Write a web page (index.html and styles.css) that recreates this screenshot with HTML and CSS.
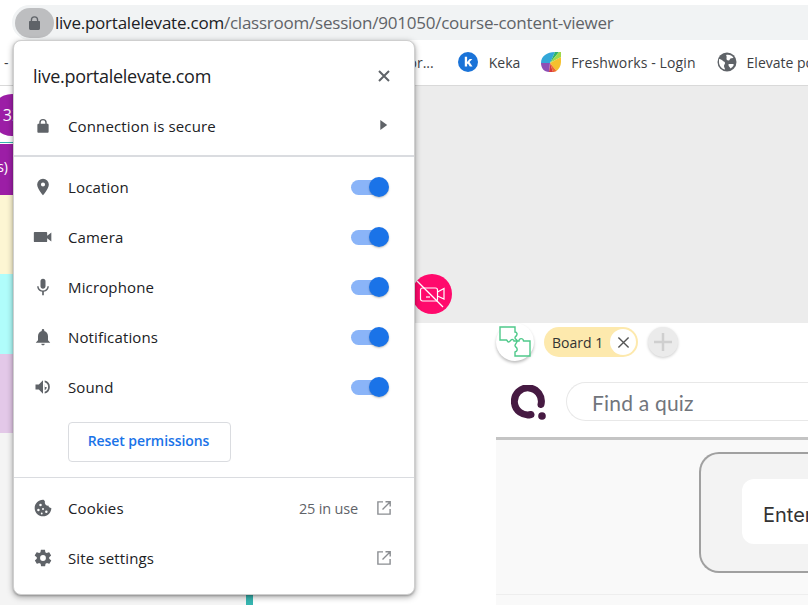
FILE: index.html
```html
<!DOCTYPE html>
<html lang="en">
<head>
<meta charset="utf-8">
<title>live.portalelevate.com</title>
<link rel="stylesheet" href="styles.css">
</head>
<body>
<div class="screen">
  <header class="address-row">
    <div class="omnibox">
      <span class="lock-pill">
        <svg class="lock-icon" viewBox="0 0 16 20"><path fill="#5f6368" d="M2.5 7V5.5a5.500 5.500 0 0 1 11 0V7H15a1 1 0 0 1 1 1v10a2 2 0 0 1-2 2H2a2 2 0 0 1-2-2V8a1 1 0 0 1 1-1zM4.500 7h7V5.500a3.500 3.500 0 0 0-7 0z"/></svg>
      </span>
      <span class="url"><span class="url-host">live.portalelevate.com</span>/classroom/session/901050/course-content-viewer</span>
    </div>
  </header>

  <nav class="bookmarks">
    <span class="bm-dash">-</span>
    <span class="bm-clipped">or...</span>
    <svg class="bm-icon bm-keka" viewBox="0 0 20 20"><circle cx="10" cy="10" r="10" fill="#1a73d8"/><path fill="#fff" d="M6.800 4.700h2.300v5.200l2.500-2.800h2.800l-2.900 3 3 4.400h-2.700l-1.900-3-.8.800v2.200H6.800z"/></svg>
    <span class="bm-label bm-keka-label">Keka</span>
    <svg class="bm-icon bm-fresh" viewBox="0 0 20 20">
      <path fill="#33a7d8" d="M9 11H0C0 4 6 0 14 0z"/>
      <path fill="#2fb36a" d="M9 11 14 0h4z"/>
      <path fill="#9fd84b" d="M9 11 18 0h2v5z"/>
      <path fill="#f5c12e" d="M9 11 20 5v5c0 4-2 7-4.500 9z"/>
      <path fill="#ee6b2f" d="m9 11 6.500 8c-1.500.7-2.500 1-3.500 1z"/>
      <path fill="#d83a3a" d="m9 11 3 9H8z"/>
      <path fill="#8e4fb5" d="M9 11 8 20c-5 0-8-4-8-9z"/>
    </svg>
    <span class="bm-label bm-fresh-label">Freshworks - Login</span>
    <svg class="bm-icon bm-globe" viewBox="0 0 20 20"><circle cx="10" cy="10" r="9.500" fill="#5f6368"/><path fill="#fff" d="M2 7c2 0 3 1 4 2s2 .5 2 2-1 1.500-1 3 1 2 1 3.500C5 17 2 14 2 10zM9 3c3-1 6 .5 7.500 2.500-1 1-2 .5-3 1s-.5 2-2 2-2-1-2-2 .5-2-.5-3.500zM12 12h4c.5 0 1 .5.500 1.500-.5 1-1.500 2-3 3-.5-1.500-2-2-2-3.500 0-.5 0-1 .5-1z"/></svg>
    <span class="bm-label bm-elevate-label">Elevate po</span>
  </nav>

  <main class="workspace">
    <aside class="participants">
      <div class="avatar-row"><span class="avatar">32</span></div>
      <div class="teal-rule"></div>
      <div class="band band-purple"><span>(s)</span></div>
      <div class="band band-cream"></div>
      <div class="band band-cyan"></div>
      <div class="band band-lilac"></div>
      <div class="band-rest"></div>
    </aside>

    <section class="stage">
      <div class="video-band"></div>
      <div class="stage-lower">
        <div class="gutter"></div>
        <div class="board">
          <div class="tabs">
            <span class="puzzle-btn">
              <svg viewBox="0 0 32 32" class="puzzle"><g fill="none" stroke="#4fc98a" stroke-width="1.400"><path d="M1 1h15v5c2 0 2.500 2 1.500 3.500s-1.500 1-1.500 2.500 2.500 1.500 2 3h-3c0-1.500-2-2-3-1s-1 2-2.500 2c-1 0-1-1.500-2-2H1z"/><path d="M18 15h2c0-2 2-3 3.500-2s.5 2 1 2H31v15H16v-4c2-.5 2.500-2 2-3.500S16 21 16 19.500s2-2.500 2-4.500z"/></g></svg>
            </span>
            <span class="board-chip">Board 1
              <span class="chip-close"><svg viewBox="0 0 14 14"><path fill="none" stroke="#555" stroke-width="1.500" d="m1.500 1.500 11 11m0-11-11 11"/></svg></span>
            </span>
            <span class="add-board"><svg viewBox="0 0 18 18"><path fill="none" stroke="#cfcfcf" stroke-width="2.500" d="M9 0v18M0 9h18"/></svg></span>
          </div>
          <div class="quiz-bar">
            <svg class="q-logo" viewBox="0 0 36 36"><path fill="none" stroke="#461a42" stroke-width="7" stroke-linecap="round" d="M20 29.500A13.500 13.500 0 1 1 30 19.500"/><circle cx="31" cy="31" r="3.800" fill="#461a42"/></svg>
            <div class="quiz-search">Find a quiz</div>
          </div>
          <div class="quiz-body">
            <div class="enter-card"><div class="enter-field">Enter</div></div>
          </div>
          <div class="quiz-foot"></div>
        </div>
      </div>
    </section>
  </main>

  <span class="cam-off">
    <svg viewBox="0 0 30 28"><g fill="none" stroke="#fff" stroke-width="1.200"><rect x="4.500" y="8" width="17" height="13" rx="2"/><path d="m21.500 12 6.500-3.500V19L21.500 16"/><path stroke-width="1.300" d="M1 1 27 27"/><path d="M10 17h4"/></g></svg>
  </span>

  <div class="popup">
    <div class="popup-head">
      <h1 class="popup-title">live.portalelevate.com</h1>
      <svg class="close-icon" viewBox="0 0 12 12"><path fill="none" stroke="#5f6368" stroke-width="2" d="m1 1 10 10m0-10L1 11"/></svg>
    </div>
    <div class="row secure-row">
      <svg class="row-icon" viewBox="0 0 24 24"><path fill="#5f6368" d="M18 9h-1V7.500a5 5 0 0 0-10 0V9H6c-.8 0-1.500.7-1.500 1.500v9c0 .8.700 1.500 1.500 1.500h12c.8 0 1.500-.7 1.500-1.500v-9c0-.8-.7-1.500-1.500-1.500zM8.900 9V7.500a3.100 3.100 0 0 1 6.200 0V9z"/></svg>
      <span class="row-label">Connection is secure</span>
      <svg class="chev" viewBox="0 0 8 12"><path fill="#5f6368" d="M0 0v11l7.500-5.500z"/></svg>
    </div>

    <div class="perm-section">
      <div class="row perm">
        <svg class="row-icon" viewBox="0 0 24 24"><path fill="#5f6368" d="M12 2a7 7 0 0 0-7 7c0 5.200 7 13 7 13s7-7.800 7-13a7 7 0 0 0-7-7zm0 9.500A2.500 2.500 0 1 1 12 6.500a2.500 2.500 0 0 1 0 5z"/></svg>
        <span class="row-label">Location</span><span class="toggle"><span class="thumb"></span></span>
      </div>
      <div class="row perm">
        <svg class="row-icon" viewBox="0 0 24 24"><path fill="#5f6368" d="M17 10.500V7a1 1 0 0 0-1-1H2a1 1 0 0 0-1 1v10a1 1 0 0 0 1 1h14a1 1 0 0 0 1-1v-3.500l5 4v-11z"/></svg>
        <span class="row-label">Camera</span><span class="toggle"><span class="thumb"></span></span>
      </div>
      <div class="row perm">
        <svg class="row-icon" viewBox="0 0 24 24"><path fill="#5f6368" d="M12 14c1.700 0 3-1.300 3-3V5a3 3 0 0 0-6 0v6c0 1.700 1.300 3 3 3zm5.300-3c0 3-2.500 5.100-5.300 5.100S6.700 14 6.700 11H5c0 3.400 2.700 6.200 6 6.700V22h2v-4.300c3.300-.5 6-3.300 6-6.700z"/></svg>
        <span class="row-label">Microphone</span><span class="toggle"><span class="thumb"></span></span>
      </div>
      <div class="row perm">
        <svg class="row-icon" viewBox="0 0 24 24"><path fill="#5f6368" d="M12 22c1.100 0 2-.9 2-2h-4c0 1.100.9 2 2 2zm6-6v-5c0-3.100-1.600-5.600-4.500-6.300V4a1.500 1.500 0 0 0-3 0v.7C7.600 5.400 6 7.900 6 11v5l-2.500 2.500V19h17v-.5z"/></svg>
        <span class="row-label">Notifications</span><span class="toggle"><span class="thumb"></span></span>
      </div>
      <div class="row perm">
        <svg class="row-icon" viewBox="0 0 24 24"><path fill="#5f6368" d="M3 9v6h4l5 5V4L7 9zm10.500 3A4.500 4.500 0 0 0 14 8v8a4.500 4.500 0 0 0 2.500-4zM14 4.200v2.100a6 6 0 0 1 0 11.400v2.100a8 8 0 0 0 0-15.600z"/></svg>
        <span class="row-label">Sound</span><span class="toggle"><span class="thumb"></span></span>
      </div>
      <button class="reset-btn" type="button">Reset permissions</button>
    </div>

    <div class="foot-section">
      <div class="row">
        <svg class="row-icon" viewBox="0 0 24 24"><path fill="#5f6368" fill-rule="evenodd" d="M21.900 11.900c-1.700.1-3.200-1.100-3.500-2.800-1.800.4-3.600-.9-4.100-2.700-.2-.7-.1-1.400.1-2-.8-1.800-1.400-2.300-2.400-2.300C6.500 2 2 6.500 2 12s4.500 10 10 10 10-4.500 10-10zM9 7a1.500 1.500 0 1 1 0 3 1.500 1.500 0 0 1 0-3zm-2.500 6a1.500 1.500 0 1 1 0 3 1.500 1.500 0 0 1 0-3zM12 12a1.200 1.200 0 1 1 0 2.400 1.200 1.200 0 0 1 0-2.400zm4 3a1.500 1.500 0 1 1 0 3 1.500 1.500 0 0 1 0-3zm-5.500 2.500a1.100 1.100 0 1 1 0 2.200 1.100 1.100 0 0 1 0-2.200z"/></svg>
        <span class="row-label">Cookies</span>
        <span class="row-note">25 in use</span>
        <svg class="ext-icon" viewBox="0 0 14 14"><path fill="none" stroke="#8a8d91" stroke-width="1.400" d="M6 .9H.9v12.200h12.200V8M5.500 8.500 13 1M8.500.8h4.700v4.700"/></svg>
      </div>
      <div class="row">
        <svg class="row-icon" viewBox="0 0 24 24"><path fill="#5f6368" d="M19.400 13c.1-.3.100-.7.100-1s0-.7-.1-1l2.100-1.600c.2-.2.200-.4.100-.6l-2-3.500c-.1-.2-.4-.3-.6-.2l-2.500 1c-.5-.4-1.100-.7-1.700-1l-.4-2.700c0-.2-.2-.4-.5-.4h-4c-.2 0-.4.200-.5.400l-.4 2.700c-.6.300-1.200.6-1.700 1l-2.500-1c-.2-.1-.5 0-.6.200l-2 3.500c-.1.200-.1.400.1.600L4.600 11c-.1.300-.1.700-.1 1s0 .7.100 1l-2.100 1.600c-.2.200-.2.400-.1.600l2 3.500c.1.200.4.300.6.200l2.500-1c.5.400 1.100.7 1.700 1l.4 2.700c.1.200.3.400.5.400h4c.3 0 .5-.2.500-.4l.4-2.700c.6-.3 1.200-.6 1.700-1l2.500 1c.2.100.5 0 .6-.2l2-3.500c.1-.2.100-.4-.1-.6zM12 15.500a3.500 3.500 0 1 1 0-7 3.500 3.500 0 0 1 0 7z"/></svg>
        <span class="row-label">Site settings</span>
        <svg class="ext-icon" viewBox="0 0 14 14"><path fill="none" stroke="#8a8d91" stroke-width="1.400" d="M6 .9H.9v12.200h12.200V8M5.500 8.500 13 1M8.500.8h4.700v4.700"/></svg>
      </div>
    </div>
  </div>
</div>
</body>
</html>
```

FILE: styles.css
```css
* { box-sizing: border-box; }
html, body { margin: 0; padding: 0; }
body { background: #fff; font-family: "Open Sans", "Liberation Sans", sans-serif; color: #202124; }
.screen { position: relative; width: 808px; height: 605px; overflow: hidden; display: flex; flex-direction: column; background: #fff; }

.address-row { height: 40px; padding: 5px 0 0 12px; flex: none; }
.omnibox { height: 35px; background: #f1f3f4; border-radius: 18px 0 0 18px; display: flex; align-items: flex-start; padding: 3px 0 0 3px; }
.lock-pill { width: 39px; height: 30px; background: #bdbec0; border-radius: 15px; display: flex; align-items: center; justify-content: center; flex: none; }
.lock-icon { width: 11px; height: 14px; }
.url { margin-left: 1px; font-size: 17px; line-height: 30px; letter-spacing: -0.23px; color: #5f6368; white-space: nowrap; }
.url-host { color: #202124; }

.bookmarks { height: 46px; flex: none; border-bottom: 1px solid #d9d9d9; display: flex; align-items: center; padding-bottom: 1px; font-size: 14px; white-space: nowrap; color: #3c4043; overflow: hidden; }
.bm-dash { margin-left: 4px; }
.bm-clipped { margin-left: 400px; }
.bm-icon { width: 20px; height: 20px; flex: none; }
.bm-keka { margin-left: 24px; }
.bm-keka-label { margin-left: 11px; }
.bm-fresh { margin-left: 21px; }
.bm-fresh-label { margin-left: 10px; letter-spacing: .11px; }
.bm-globe { margin-left: 21px; }
.bm-elevate-label { margin-left: 10px; }

.workspace { flex: 1; display: grid; grid-template-columns: 253px 1fr; min-height: 0; }
.participants { display: flex; flex-direction: column; border-right: 7px solid #36b5b0; background: #fff; }
.avatar-row { height: 49px; padding-top: 8px; flex: none; }
.avatar { display: block; width: 42px; height: 42px; margin-left: -9px; border-radius: 50%; background: #9c1ea6; color: #fff; font-size: 16px; line-height: 42px; text-align: center; }
.teal-rule { height: 1px; background: #36b5b0; margin-top: 7px; flex: none; }
.band { flex: none; }
.band-purple { height: 51px; margin-top: 1px; background: #9c1ea6; color: #fff; font-size: 14px; line-height: 46px; text-indent: -7px; }
.band-cream { height: 79px; background: #fdf6d3; }
.band-cyan { height: 80px; background: #b0fdfb; }
.band-lilac { height: 79px; background: #e3c8e8; }
.band-rest { flex: 1; background: #f4f4f4; }

.stage { display: flex; flex-direction: column; min-width: 0; }
.video-band { height: 237px; flex: none; background: #ececec; }
.stage-lower { flex: 1; display: flex; }
.gutter { width: 243px; flex: none; background: #fff; }
.board { flex: 1; min-width: 0; display: flex; flex-direction: column; }

.tabs { height: 38px; flex: none; display: flex; align-items: center; }
.puzzle-btn { width: 38px; height: 38px; border-radius: 50%; background: #fff; box-shadow: 0 2px 3px rgba(0,0,0,.25); display: flex; align-items: center; justify-content: center; flex: none; }
.puzzle { width: 32px; height: 32px; flex: none; }
.board-chip { margin-left: 10px; width: 94px; height: 30px; border-radius: 15px; background: #fde9ad; display: flex; align-items: center; padding: 0 2px 0 8px; font-size: 14px; justify-content: space-between; flex: none; color: #333; }
.chip-close { width: 26px; height: 26px; border-radius: 50%; background: #fff; display: flex; align-items: center; justify-content: center; }
.chip-close svg { width: 13px; height: 13px; }
.add-board { margin-left: 10px; width: 30px; height: 30px; border-radius: 50%; background: #ebebeb; box-shadow: 0 1px 3px rgba(0,0,0,.2); display: flex; align-items: center; justify-content: center; flex: none; }
.add-board svg { width: 18px; height: 18px; }

.quiz-bar { height: 79px; flex: none; display: flex; align-items: flex-start; padding: 21px 0 0 15px; border-bottom: 3px solid #c4c4c4; }
.q-logo { width: 36px; height: 36px; flex: none; margin-top: 3px; }
.quiz-search { margin-left: 19px; flex: 1; height: 39px; border: 1px solid #e8e8e8; border-right: 0; border-radius: 20px 0 0 20px; padding-left: 25px; font-family: Lato, "Open Sans", sans-serif; font-size: 21px; line-height: 40px; color: #71757c; letter-spacing: .2px; }

.quiz-body { height: 155px; flex: none; background: #f9f9f9; padding: 12px 0 0 203px; border-bottom: 1px solid #eee; }
.enter-card { height: 121px; background: #f3f3f3; border: 2px solid #a0a0a0; border-right: 0; border-radius: 20px 0 0 20px; padding: 25px 0 0 41px; }
.enter-field { height: 65px; background: #fff; border-radius: 12px 0 0 12px; padding-left: 21px; font-family: Inter, "Open Sans", sans-serif; font-size: 20px; line-height: 73px; color: #333; overflow: hidden; }
.quiz-foot { flex: 1; background: #f9f9f9; }

.cam-off { position: absolute; left: 412px; top: 274px; width: 40px; height: 40px; border-radius: 50%; background: #ff0a6c; display: flex; align-items: center; justify-content: center; }
.cam-off svg { width: 30px; height: 28px; margin-left: -2px; flex: none; }

.popup { position: absolute; left: 13px; top: 40px; width: 402px; height: 555px; background: #fff; border: 1px solid #cfcfcf; border-radius: 8px; box-shadow: 0 2px 6px rgba(0,0,0,.35), 0 1px 2px rgba(0,0,0,.2); font-size: 15px; display: flex; flex-direction: column; }
.popup-head { height: 60px; flex: none; display: flex; align-items: center; justify-content: space-between; padding: 9px 24px 0 19px; }
.popup-title { margin: 0; font-size: 18px; font-weight: 400; letter-spacing: -.28px; color: #202124; }
.close-icon { width: 12px; height: 12px; }
.row { height: 50px; flex: none; display: flex; align-items: center; padding: 0 23px 0 19px; }
.row-icon { width: 20px; height: 20px; flex: none; margin-right: 15px; }
.row-label { flex: 1; letter-spacing: .14px; color: #202124; }
.secure-row { height: 54px; padding-bottom: 4px; }
.secure-row .row-icon { width: 18px; height: 18px; margin: 0 16px 0 1px; }
.chev { width: 8px; height: 11px; margin: -2px 3px 0 0; }
.perm-section { flex: none; height: 322px; border-top: 2px solid #dadce0; padding-top: 5px; display: flex; flex-direction: column; }
.toggle { position: relative; width: 34px; height: 15px; border-radius: 8px; background: #8ab4f8; flex: none; margin-right: 6px; }
.thumb { position: absolute; right: -4px; top: -3px; width: 20px; height: 20px; border-radius: 50%; background: #1a73e8; box-shadow: 0 1px 2px rgba(0,0,0,.25); }
.reset-btn { align-self: flex-start; margin: 10px 0 0 54px; width: 163px; height: 40px; background: #fff; border: 1px solid #dadce0; border-radius: 4px; color: #1a73e8; font-family: inherit; font-size: 14px; font-weight: 600; letter-spacing: -.08px; padding: 0 2px 3px 0; }
.foot-section { border-top: 1px solid #dadce0; padding-top: 5px; flex: 1; }
.row-note { color: #5f6368; font-size: 14.500px; letter-spacing: -.17px; margin-right: 19px; }
.ext-icon { width: 14px; height: 14px; flex: none; }
```
